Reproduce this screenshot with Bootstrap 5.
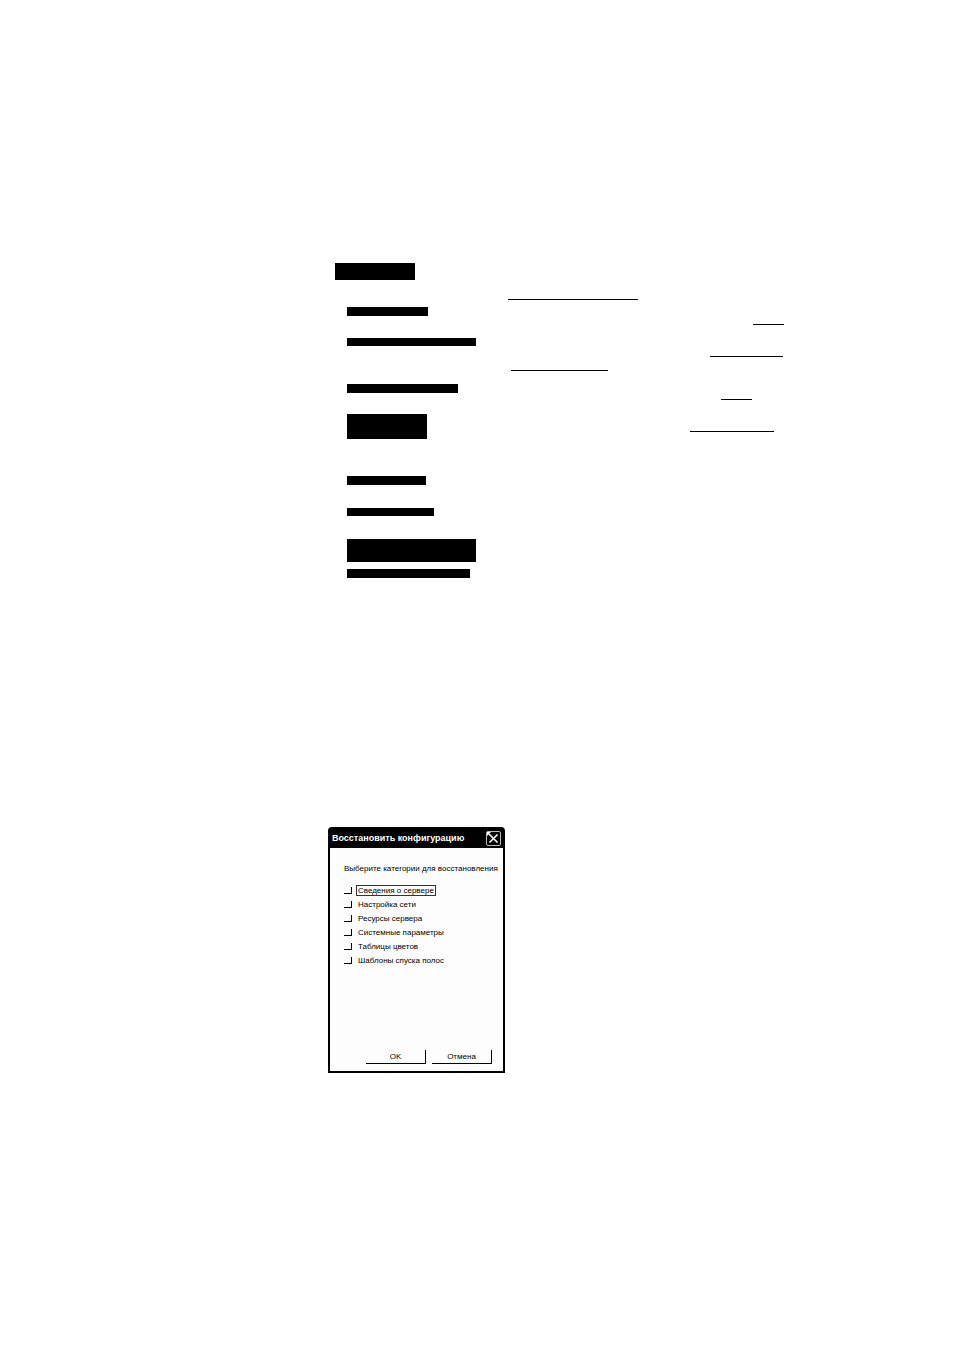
<!DOCTYPE html>
<html lang="ru">
<head>
<meta charset="utf-8">
<meta name="viewport" content="width=device-width, initial-scale=1">
<title>Восстановить конфигурацию</title>
<link href="https://cdn.jsdelivr.net/npm/bootstrap@5.3.0/dist/css/bootstrap.min.css" rel="stylesheet">
<style>
  body { background: #fff; color: #000; font-family: "Liberation Sans", Arial, sans-serif; font-size: 8px; line-height: 14px; }
  .page-top { padding-top: 263px; }
  .terms { width: 190px; padding-left: 29px; }
  .bar { height: 9px; background: #000; }
  .bar-title { height: 17px; margin-left: -12px; }
  .bar-thin { height: 8px; }
  .bar-tall { height: 25px; }
  .bar-wide { height: 23px; }
  .links { padding-top: 36px; }
  .rule { height: 1px; background: #000; }
  .dialog-area { padding: 249px 0 0 10px; }
  .dialog { width: 177px; background: #fdfdfd; border: 2px solid #000; border-radius: 4px 4px 0 0; }
  .dialog-title { height: 19px; padding: 0 2px; background: #000; color: #fff; }
  .dialog-title h1 { font-size: 9px; line-height: 19px; font-weight: 700; }
  .close-btn { width: 15px; height: 15px; background: none; }
  .dialog-body { padding: 14px 8px 0 14px; }
  .choices { padding: 7px 0 83px; }
  .choice { height: 14px; gap: 4px; }
  .tick { appearance: none; width: 8px; height: 7px; margin: 0; background: transparent; border: solid #000; border-width: 0 1px 1px 0; border-radius: 0; }
  .tick:checked { background: #000; }
  .choice label { line-height: 9px; padding: 0 1px; border: 1px solid transparent; }
  .choice .current { border-color: #333; }
  .actions { gap: 6px; padding: 0 3px 7px 0; }
  .push { width: 60px; height: 14px; line-height: 13px; background: transparent; color: #000; border: solid #000; border-width: 0 1px 1px 0; }
</style>
</head>
<body>
<div class="container-fluid p-0">
  <div class="row g-0">
    <div class="col-8 offset-4">
      <section class="page-top d-flex">
        <div class="terms flex-shrink-0">
          <div class="bar bar-title" style="width:80px"></div>
          <div class="bar" style="width:81px;margin-top:27px"></div>
          <div class="bar bar-thin" style="width:129px;margin-top:22px"></div>
          <div class="bar" style="width:111px;margin-top:38px"></div>
          <div class="bar bar-tall" style="width:80px;margin-top:21px"></div>
          <div class="bar" style="width:79px;margin-top:37px"></div>
          <div class="bar bar-thin" style="width:87px;margin-top:23px"></div>
          <div class="bar bar-wide" style="width:129px;margin-top:23px"></div>
          <div class="bar" style="width:123px;margin-top:7px"></div>
        </div>
        <div class="links flex-grow-1">
          <div class="rule" style="width:130px"></div>
          <div class="rule" style="width:31px;margin:24px 0 0 245px"></div>
          <div class="rule" style="width:73px;margin:31px 0 0 202px"></div>
          <div class="rule" style="width:97px;margin:13px 0 0 3px"></div>
          <div class="rule" style="width:31px;margin:28px 0 0 213px"></div>
          <div class="rule" style="width:84px;margin:31px 0 0 182px"></div>
        </div>
      </section>

      <section class="dialog-area">
        <form class="dialog" role="dialog" aria-labelledby="dialog-heading">
          <header class="dialog-title d-flex align-items-center justify-content-between">
            <h1 class="m-0 text-nowrap" id="dialog-heading">Восстановить конфигурацию</h1>
            <button type="button" class="close-btn border-0 p-0 d-flex flex-shrink-0" aria-label="Закрыть">
              <svg width="15" height="15" viewBox="0 0 15 15" fill="none" stroke="#fff">
                <rect x=".5" y=".5" width="14" height="14" rx="1.5" stroke="#bbb"/>
                <path d="M3 3l8.500 8.500M11.500 3.500l-8 8" stroke-width="1.6"/>
                <path d="M1 1h4L1 5z" fill="#fff" stroke="none"/>
              </svg>
            </button>
          </header>
          <div class="dialog-body">
            <p class="m-0 text-nowrap">Выберите категории для восстановления</p>
            <div class="choices">
              <div class="choice d-flex align-items-center"><input class="tick" type="checkbox" id="c1"><label class="current" for="c1">Сведения о сервере</label></div>
              <div class="choice d-flex align-items-center"><input class="tick" type="checkbox" id="c2"><label for="c2">Настройка сети</label></div>
              <div class="choice d-flex align-items-center"><input class="tick" type="checkbox" id="c3"><label for="c3">Ресурсы сервера</label></div>
              <div class="choice d-flex align-items-center"><input class="tick" type="checkbox" id="c4"><label for="c4">Системные параметры</label></div>
              <div class="choice d-flex align-items-center"><input class="tick" type="checkbox" id="c5"><label for="c5">Таблицы цветов</label></div>
              <div class="choice d-flex align-items-center"><input class="tick" type="checkbox" id="c6"><label for="c6">Шаблоны спуска полос</label></div>
            </div>
            <div class="actions d-flex justify-content-end">
              <button type="button" class="push p-0">OK</button>
              <button type="button" class="push p-0">Отмена</button>
            </div>
          </div>
        </form>
      </section>
    </div>
  </div>
</div>
<script src="https://cdn.jsdelivr.net/npm/bootstrap@5.3.0/dist/js/bootstrap.bundle.min.js"></script>
</body>
</html>
